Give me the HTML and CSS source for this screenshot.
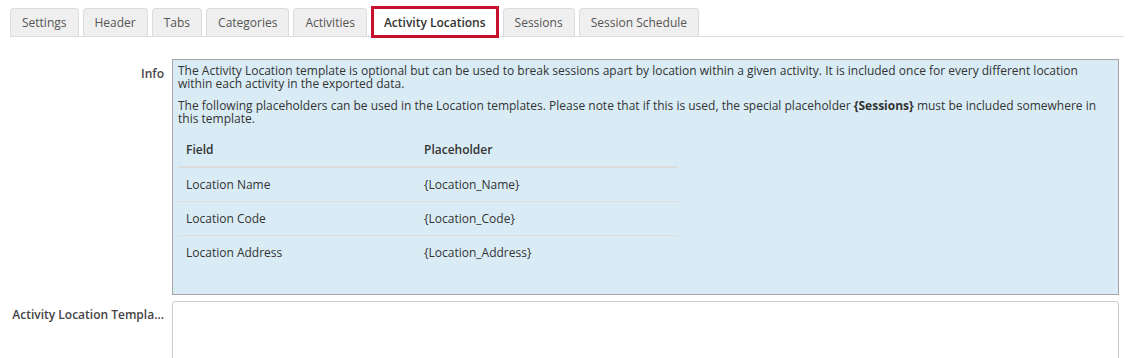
FILE: index.html
```html
<!DOCTYPE html>
<html>
<head>
<meta charset="utf-8">
<link rel="stylesheet" href="styles.css">
</head>
<body>
<div class="page">
  <ul class="tabs">
    <li class="tab">Settings</li>
    <li class="tab">Header</li>
    <li class="tab">Tabs</li>
    <li class="tab">Categories</li>
    <li class="tab">Activities</li>
    <li class="tab active">Activity Locations</li>
    <li class="tab">Sessions</li>
    <li class="tab">Session Schedule</li>
  </ul>
  <div class="form">
    <div class="label">Info</div>
    <div class="info">
      <p>The Activity Location template is optional but can be used to break sessions apart by location within a given activity. It is included once for every different location within each activity in the exported data.</p>
      <p>The following placeholders can be used in the Location templates. Please note that if this is used, the special placeholder <b>{Sessions}</b> must be included somewhere in<br>this template.</p>
      <table class="ph">
        <thead>
          <tr><th class="c1">Field</th><th>Placeholder</th></tr>
        </thead>
        <tbody>
          <tr><td>Location Name</td><td>{Location_Name}</td></tr>
          <tr><td>Location Code</td><td>{Location_Code}</td></tr>
          <tr><td>Location Address</td><td>{Location_Address}</td></tr>
        </tbody>
      </table>
    </div>
    <div class="label label2">Activity Location Templa...</div>
    <div class="textarea"></div>
  </div>
</div>
</body>
</html>
```
FILE: styles.css
```css
html, body {
  margin: 0;
  padding: 0;
  background: #fff;
  font-family: "Open Sans", "Liberation Sans", sans-serif;
  color: #333;
  overflow: hidden;
}
.page {
  padding-top: 8px;
  height: 350px;
  overflow: hidden;
}
.tabs {
  list-style: none;
  margin: 0 4px 0 10px;
  padding: 0;
  display: flex;
  gap: 4px;
  border-bottom: 1px solid #dcdcdc;
  height: 28px;
}
.tab {
  box-sizing: border-box;
  height: 28px;
  padding: 0 11px;
  font-size: 12px;
  line-height: 27px;
  color: #555;
  background: #efefef;
  border: 1px solid #dcdcdc;
  border-bottom: none;
  border-radius: 4px 4px 0 0;
  white-space: nowrap;
}
.tab.active {
  background: #fff;
  color: #333;
  font-weight: 600;
  outline: 3px solid #c8102e;
  outline-offset: -1px;
  border-radius: 0;
  padding: 0 10px;
  height: 28px;
  margin: 0 2px;
}
.form {
  margin-top: 22px;
  display: grid;
  grid-template-columns: 164px 1fr;
  column-gap: 8px;
  row-gap: 6px;
  padding-right: 9px;
}
.label {
  text-align: right;
  font-size: 12px;
  font-weight: 600;
  color: #444;
  padding-top: 6px;
  line-height: 17px;
}
.label2 {
  padding-top: 5px;
  white-space: nowrap;
}
.info {
  background: #d9ecf6;
  border: 1px solid #a3a6a8;
  padding: 4px 5px 5px 5px;
  font-size: 12px;
  line-height: 13px;
  color: #333;
}
.info p {
  margin: 0 0 9px 0;
}
.info p + p {
  margin-bottom: 8px;
}
.info b {
  font-weight: 700;
}
.ph {
  width: 500px;
  border-collapse: collapse;
  font-size: 12px;
  line-height: 17px;
  margin-bottom: 20px;
}
.ph th, .ph td {
  text-align: left;
  padding: 8px;
  color: #333;
}
.ph th {
  font-weight: 600;
  border-bottom: 2px solid #dddddd;
}
.ph .c1 {
  width: 222px;
}
.ph tbody tr + tr td {
  border-top: 1px solid #dddddd;
}
.textarea {
  height: 80px;
  border: 1px solid #cccccc;
  border-radius: 3px;
  background: #fff;
}
```
